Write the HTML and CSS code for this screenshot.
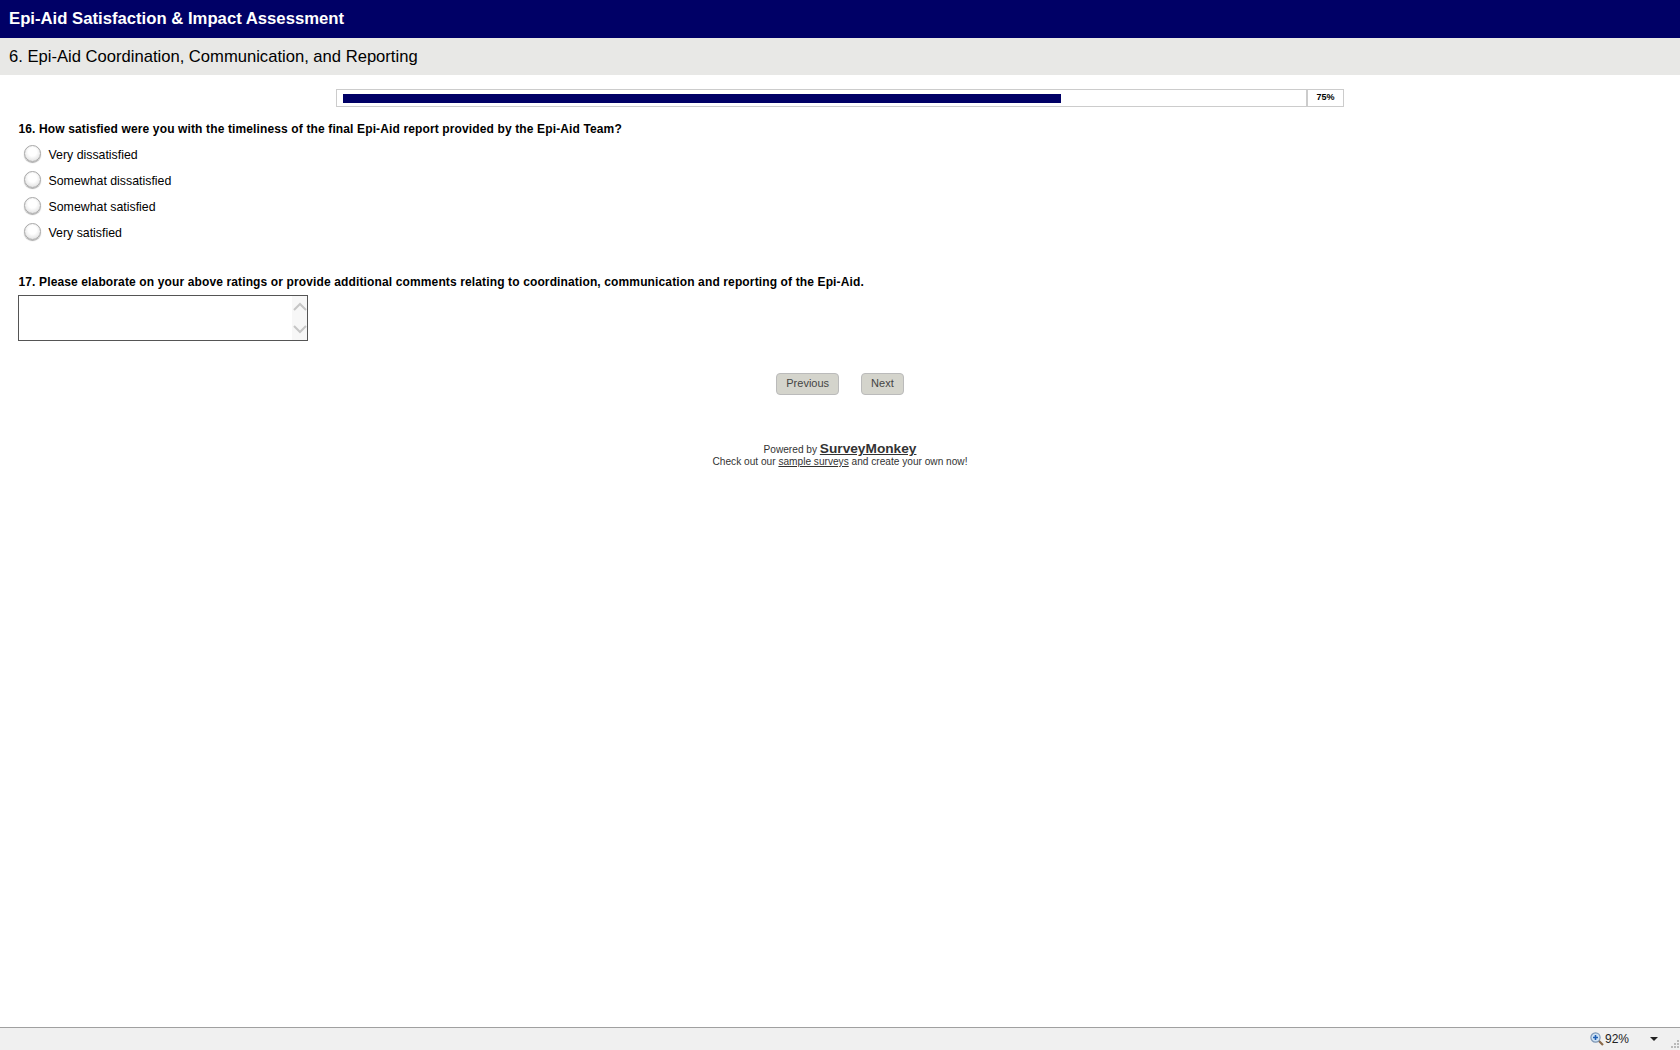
FILE: index.html

```html
<!DOCTYPE html>
<html lang="en">
<head>
  <meta charset="UTF-8">
  <title>Epi-Aid Satisfaction &amp; Impact Assessment</title>
  <link rel="stylesheet" href="styles.css">
</head>
<body>

  <div class="page">
    <h1 class="title">Epi-Aid Satisfaction &amp; Impact Assessment</h1>
    <h2 class="section">6. Epi-Aid Coordination, Communication, and Reporting</h2>

    <div class="progress">
      <div class="track"><div class="fill"></div></div>
      <div class="percent">75%</div>
    </div>

    <div class="question q16">
      <p class="qtext">16. How satisfied were you with the timeliness of the final Epi-Aid report provided by the Epi-Aid Team?</p>
      <div class="option"><span class="radio"></span><span class="label">Very dissatisfied</span></div>
      <div class="option"><span class="radio"></span><span class="label">Somewhat dissatisfied</span></div>
      <div class="option"><span class="radio"></span><span class="label">Somewhat satisfied</span></div>
      <div class="option"><span class="radio"></span><span class="label">Very satisfied</span></div>
    </div>

    <div class="question q17">
      <p class="qtext">17. Please elaborate on your above ratings or provide additional comments relating to coordination, communication and reporting of the Epi-Aid.</p>
      <div class="textbox">
        <div class="scroll">
          <svg width="14" height="10" viewBox="0 0 14 10"><path d="M1 8 L7 2 L13 8" fill="none" stroke="#c6c6c6" stroke-width="2"/></svg>
          <svg width="14" height="10" viewBox="0 0 14 10"><path d="M1 2 L7 8 L13 2" fill="none" stroke="#c6c6c6" stroke-width="2"/></svg>
        </div>
      </div>
    </div>

    <div class="nav">
      <button class="btn">Previous</button>
      <button class="btn">Next</button>
    </div>

    <div class="footer">
      <div class="powered">Powered by <a href="#" class="brand">SurveyMonkey</a></div>
      <div class="checkout">Check out our <a href="#">sample surveys</a> and create your own now!</div>
    </div>
  </div>

  <div class="status">
    <svg class="zoom-icon" width="14" height="14" viewBox="0 0 14 14">
      <path d="M8.5 8.5 L13 13" stroke="#8a6a4a" stroke-width="2.2"/>
      <circle cx="5.5" cy="5.5" r="4.6" fill="#cfe3f5" stroke="#7d97b5" stroke-width="1.2"/>
      <path d="M3 5.5 H8 M5.5 3 V8" stroke="#1f5fb4" stroke-width="1.6"/>
    </svg>
    <span class="zoom-text">92%</span>
    <span class="caret"></span>
    <svg class="grip" width="10" height="10" viewBox="0 0 10 10" fill="#b9b9b9">
      <rect x="7" y="1" width="2" height="2"/>
      <rect x="4" y="4" width="2" height="2"/><rect x="7" y="4" width="2" height="2"/>
      <rect x="1" y="7" width="2" height="2"/><rect x="4" y="7" width="2" height="2"/><rect x="7" y="7" width="2" height="2"/>
    </svg>
  </div>

</body>
</html>
```

FILE: styles.css

```css
html, body {
  height: 100%;
}

body {
  margin: 0;
  display: flex;
  flex-direction: column;
  background: #fff;
  color: #000;
  font-family: "Liberation Sans", Arial, sans-serif;
  overflow: hidden;
}

.page {
  flex: 1;
}

.title {
  margin: 0;
  height: 38px;
  padding-left: 9px;
  background: #006;
  color: #fff;
  font-size: 16.7px;
  font-weight: bold;
  line-height: 37px;
}

.section {
  margin: 0;
  height: 37px;
  padding-left: 9px;
  background: #e8e8e6;
  font-size: 16.6px;
  font-weight: normal;
  line-height: 37px;
}

.progress {
  display: flex;
  width: 1008px;
  height: 18px;
  margin: 14px auto 0;
  box-sizing: border-box;
  border: 1px solid #ccc;
}

.track {
  flex: 1;
  padding: 4px 6px 3px;
  border-right: 2px solid #ccc;
}

.fill {
  width: 75%;
  height: 9px;
  background: #006;
}

.percent {
  width: 35px;
  font-size: 9px;
  font-weight: bold;
  line-height: 15px;
  text-align: center;
}

.question {
  padding-left: 18px;
}

.q16 {
  margin-top: 14px;
}

.q17 {
  margin-top: 29px;
}

.qtext {
  margin: 0 0 0 0.5px;
  font-size: 12px;
  font-weight: bold;
  line-height: 16px;
  letter-spacing: 0.13px;
}

.option {
  display: flex;
  align-items: center;
  height: 26px;
  margin-left: 6px;
}

.q16 .qtext {
  margin-bottom: 4px;
}

.radio {
  width: 15px;
  height: 15px;
  margin-bottom: 2px;
  border: 1px solid #a8a8a8;
  border-radius: 50%;
  background: radial-gradient(circle at 50% 40%, #fff 35%, #e8e8e8 70%, #c8c8c8 100%);
  box-shadow: 0 1px 1px #aaa;
}

.label {
  margin-left: 7.5px;
  padding-top: 2px;
  font-size: 12.35px;
}

.q17 .qtext {
  margin-bottom: 5px;
}

.textbox {
  display: flex;
  justify-content: flex-end;
  box-sizing: border-box;
  width: 290px;
  height: 46px;
  border: 1px solid #555;
  background: #fff;
}

.scroll {
  display: flex;
  flex-direction: column;
  align-items: center;
  justify-content: space-around;
  width: 15px;
  background: #f7f7f7;
}

.nav {
  display: flex;
  justify-content: center;
  gap: 22px;
  margin-top: 32px;
}

.btn {
  height: 22px;
  padding: 0 9px 2px;
  border: 1px solid #bbb;
  border-radius: 4px;
  background: #d4d4cc;
  color: #444;
  font-family: inherit;
  font-size: 11px;
}

.footer {
  margin-top: 47px;
  color: #333;
  font-size: 10.15px;
  text-align: center;
}

.footer a {
  color: #333;
}

.powered {
  line-height: 14px;
}

.brand {
  font-size: 13.7px;
  font-weight: bold;
}

.checkout {
  line-height: 11px;
  margin-top: -1px;
}

.status {
  display: flex;
  align-items: center;
  height: 22px;
  border-top: 1px solid #a0a0a0;
  background: #f0f0f0;
  font-size: 12px;
  color: #222;
}

.zoom-icon {
  margin-left: auto;
}

.zoom-text {
  margin-left: 1px;
  width: 45px;
}

.caret {
  width: 0;
  height: 0;
  border-left: 4px solid transparent;
  border-right: 4px solid transparent;
  border-top: 4px solid #222;
}

.grip {
  margin: 10px 0 0 12px;
}
```
